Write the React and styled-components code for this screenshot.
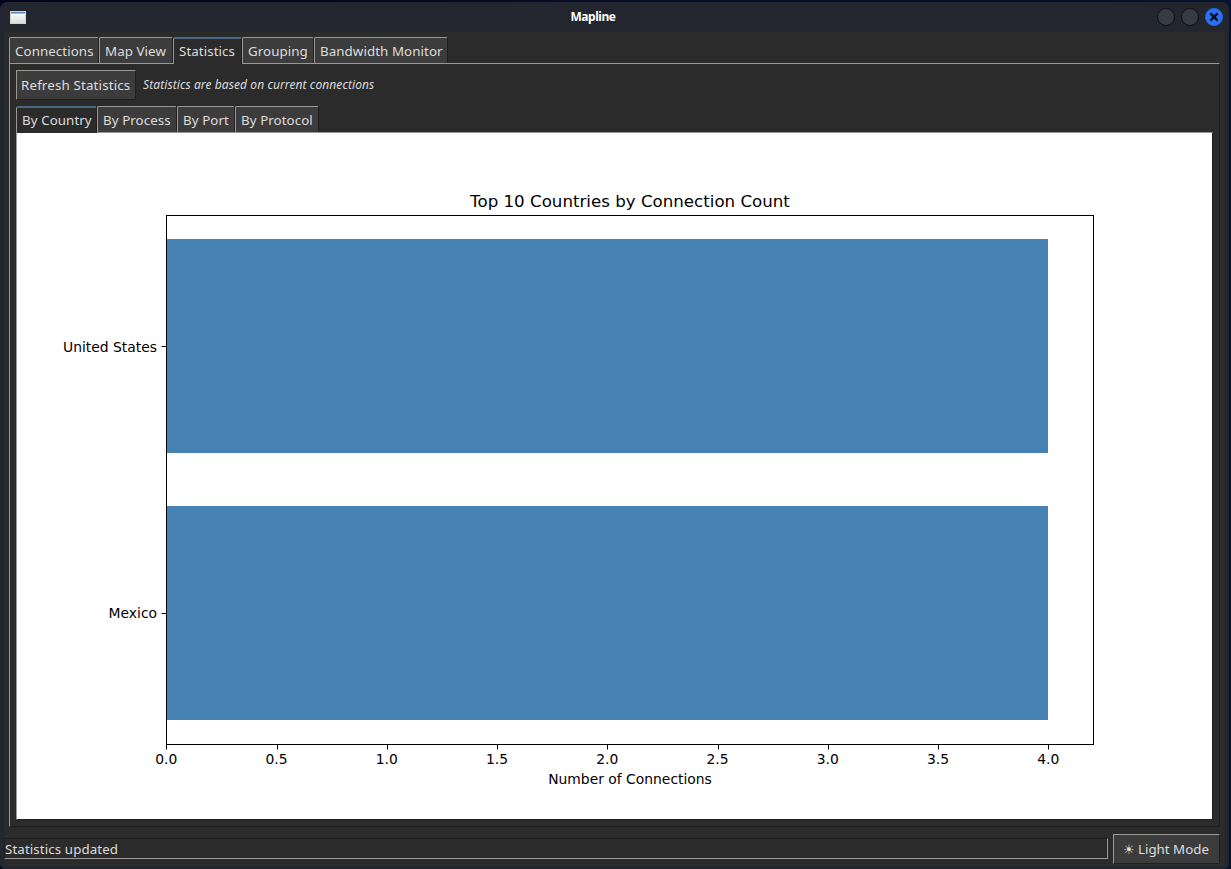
import React from 'react';
import styled, { createGlobalStyle, css } from 'styled-components';

const GlobalStyle = createGlobalStyle`
  * { box-sizing: border-box; }
  body { margin: 0; background: #020b20; overflow: hidden; }
`;

const LIGHT = '#9b9994';
const DARK = '#1f1f1f';

const Desktop = styled.div`
  width: 1231px;
  height: 869px;
  padding: 2px 2px 0 0;
  background: linear-gradient(90deg, #01051a, #04142f);
  font-family: 'Noto Sans', sans-serif;
  font-size: 13.33px;
  letter-spacing: 0.07px;
  color: #dcdcdc;
`;

const Window = styled.div`
  display: flex;
  flex-direction: column;
  width: 1229px;
  height: 867px;
  padding: 0 4px 3px;
  background: #23262f;
  border-radius: 7px 7px 5px 5px;
`;

const TitleBar = styled.header`
  display: grid;
  grid-template-columns: 80px 1fr 80px;
  align-items: center;
  flex: 0 0 30px;
`;

const WindowIcon = styled.svg`
  display: block;
  margin-left: 6px;
`;

const WindowTitle = styled.h1`
  margin: 0;
  padding-right: 43px;
  text-align: center;
  font-size: 12px;
  letter-spacing: -0.45px;
  line-height: 30px;
  font-weight: 700;
  color: #fff;
`;

const WindowButtons = styled.div`
  display: flex;
  justify-content: flex-end;
  gap: 6px;
  padding-right: 2px;
`;

const WindowButton = styled.button`
  display: grid;
  place-items: center;
  width: 18px;
  height: 18px;
  padding: 0;
  border-radius: 50%;
  border: 1px solid ${(p) => (p.$close ? '#2869e6' : '#0d0f13')};
  background: ${(p) => (p.$close ? '#2970f5' : '#373b46')};
`;

const Content = styled.div`
  display: flex;
  flex-direction: column;
  flex: 1;
  min-height: 0;
  padding: 5px 5px 2px 0;
  background: #2b2b2b;
`;

const Notebook = styled.section`
  display: flex;
  flex-direction: column;
  flex: ${(p) => (p.$outer ? '0 0 790px' : '1')};
  min-height: 0;
  margin-left: ${(p) => (p.$outer ? '5px' : '0')};
`;

const TabRow = styled.nav`
  display: flex;
  flex: 0 0 26px;
`;

const Tab = styled.button`
  position: relative;
  width: ${(p) => p.$width}px;
  height: 26px;
  padding: 2px 0 0 5px;
  border: solid;
  border-width: 1px 1px 0;
  border-color: ${LIGHT} ${DARK} ${LIGHT} ${LIGHT};
  border-radius: 2px 2px 0 0;
  background: #3c3c3c;
  color: #dcdcdc;
  font: inherit;
  letter-spacing: inherit;
  line-height: 23px;
  text-align: left;
  white-space: nowrap;
  ${(p) =>
    p.$selected &&
    css`
      height: 27px;
      padding-top: 1px;
      padding-bottom: 1px;
      margin-bottom: -1px;
      z-index: 1;
      background: #2b2b2b;
      border-top: 2px solid #4a6984;
    `}
`;

const Panel = styled.div`
  display: flex;
  flex-direction: column;
  flex: 1;
  min-height: 0;
  padding: ${(p) => (p.$padded ? '6px' : '0')};
  border: 1px solid;
  border-color: ${LIGHT} ${DARK} ${DARK} ${LIGHT};
  background: ${(p) => (p.$padded ? '#2b2b2b' : '#fff')};
`;

const Toolbar = styled.div`
  display: flex;
  align-items: center;
  flex: 0 0 30px;
  gap: 7px;
  margin-bottom: 6px;
`;

const Button = styled.button`
  flex: none;
  width: ${(p) => p.$width}px;
  height: 30px;
  padding: 0 0 0 ${(p) => p.$inset}px;
  border: 1px solid;
  border-color: ${LIGHT} ${DARK} ${DARK} ${LIGHT};
  background: #3c3c3c;
  color: #dcdcdc;
  font: inherit;
  letter-spacing: ${(p) => p.$tracking || 0}px;
  line-height: 28px;
  text-align: left;
  white-space: nowrap;
`;

const Hint = styled.em`
  font-size: 12px;
  letter-spacing: 0.09px;
  line-height: 30px;
`;

const Footer = styled.footer`
  display: flex;
  gap: 5px;
  align-items: center;
  margin-top: 7px;
  height: 30px;
`;

const StatusText = styled.div`
  flex: 1;
  height: 21px;
  border: 1px solid;
  border-color: ${DARK} ${LIGHT} ${LIGHT} ${DARK};
  letter-spacing: 0.1px;
  line-height: 20px;
  margin-top: -1px;
`;

const ChartSvg = styled.svg`
  display: block;
  font-family: 'DejaVu Sans', sans-serif;
  font-size: 13.89px;
  letter-spacing: 0;
`;

function TabStrip({ tabs, active }) {
  return (
    <TabRow>
      {tabs.map(([label, width]) => (
        <Tab key={label} $width={width} $selected={label === active}>
          {label}
        </Tab>
      ))}
    </TabRow>
  );
}

const countries = [
  { name: 'United States', top: 106, middle: 213.5, baseline: 218.5 },
  { name: 'Mexico', top: 373, middle: 480.5, baseline: 485 },
];
const ticks = [149.5, 260.5, 370.5, 480.5, 590.5, 701.5, 811.5, 921.5, 1031.5];

function CountryChart() {
  return (
    <ChartSvg width="1195" height="686">
      <text x="613" y="74" textAnchor="middle" fontSize="16.67">
        Top 10 Countries by Connection Count
      </text>
      {countries.map((c) => (
        <g key={c.name}>
          <rect x="150" y={c.top} width="881" height="214" fill="#4682b4" />
          <path d={`M144.500 ${c.middle}h5`} stroke="#000" />
          <text x="140" y={c.baseline} textAnchor="end">
            {c.name}
          </text>
        </g>
      ))}
      <rect x="149.500" y="82.500" width="927" height="529" fill="none" stroke="#000" />
      {ticks.map((x, i) => (
        <g key={x}>
          <path d={`M${x} 612v4.500`} stroke="#000" />
          <text x={149.3 + i * 110.25} y="631" textAnchor="middle">
            {(i / 2).toFixed(1)}
          </text>
        </g>
      ))}
      <text x="613" y="651" textAnchor="middle">
        Number of Connections
      </text>
    </ChartSvg>
  );
}

const mainTabs = [
  ['Connections', 90],
  ['Map View', 74],
  ['Statistics', 69],
  ['Grouping', 72],
  ['Bandwidth Monitor', 134],
];
const statTabs = [
  ['By Country', 81],
  ['By Process', 80],
  ['By Port', 58],
  ['By Protocol', 84],
];

export default function App() {
  return (
    <Desktop>
      <GlobalStyle />
      <Window>
        <TitleBar>
          <WindowIcon width="16" height="13">
            <defs>
              <linearGradient id="sheet" x1="0" y1="0" x2="0" y2="1">
                <stop offset="0" stopColor="#fff" />
                <stop offset="1" stopColor="#dcdcd7" />
              </linearGradient>
            </defs>
            <rect x="0.500" y="0.500" width="15" height="12" fill="url(#sheet)" stroke="#d5d5d0" />
            <rect x="1" y="1" width="14" height="1.500" fill="#5b85c0" />
          </WindowIcon>
          <WindowTitle>Mapline</WindowTitle>
          <WindowButtons>
            <WindowButton aria-label="Minimize" />
            <WindowButton aria-label="Maximize" />
            <WindowButton aria-label="Close" $close>
              <svg width="10" height="10" viewBox="0 0 10 10">
                <path d="M1.400 1.400L8.600 8.600M8.600 1.400L1.400 8.600" stroke="#08101f" strokeWidth="2.400" />
              </svg>
            </WindowButton>
          </WindowButtons>
        </TitleBar>
        <Content>
          <Notebook $outer>
            <TabStrip tabs={mainTabs} active="Statistics" />
            <Panel $padded>
              <Toolbar>
                <Button $width={120} $inset={4} $tracking={0.16}>
                  Refresh Statistics
                </Button>
                <Hint>Statistics are based on current connections</Hint>
              </Toolbar>
              <Notebook>
                <TabStrip tabs={statTabs} active="By Country" />
                <Panel>
                  <CountryChart />
                </Panel>
              </Notebook>
            </Panel>
          </Notebook>
          <Footer>
            <StatusText>Statistics updated</StatusText>
            <Button $width={107} $inset={8.5}>
              ☀ Light Mode
            </Button>
          </Footer>
        </Content>
      </Window>
    </Desktop>
  );
}
